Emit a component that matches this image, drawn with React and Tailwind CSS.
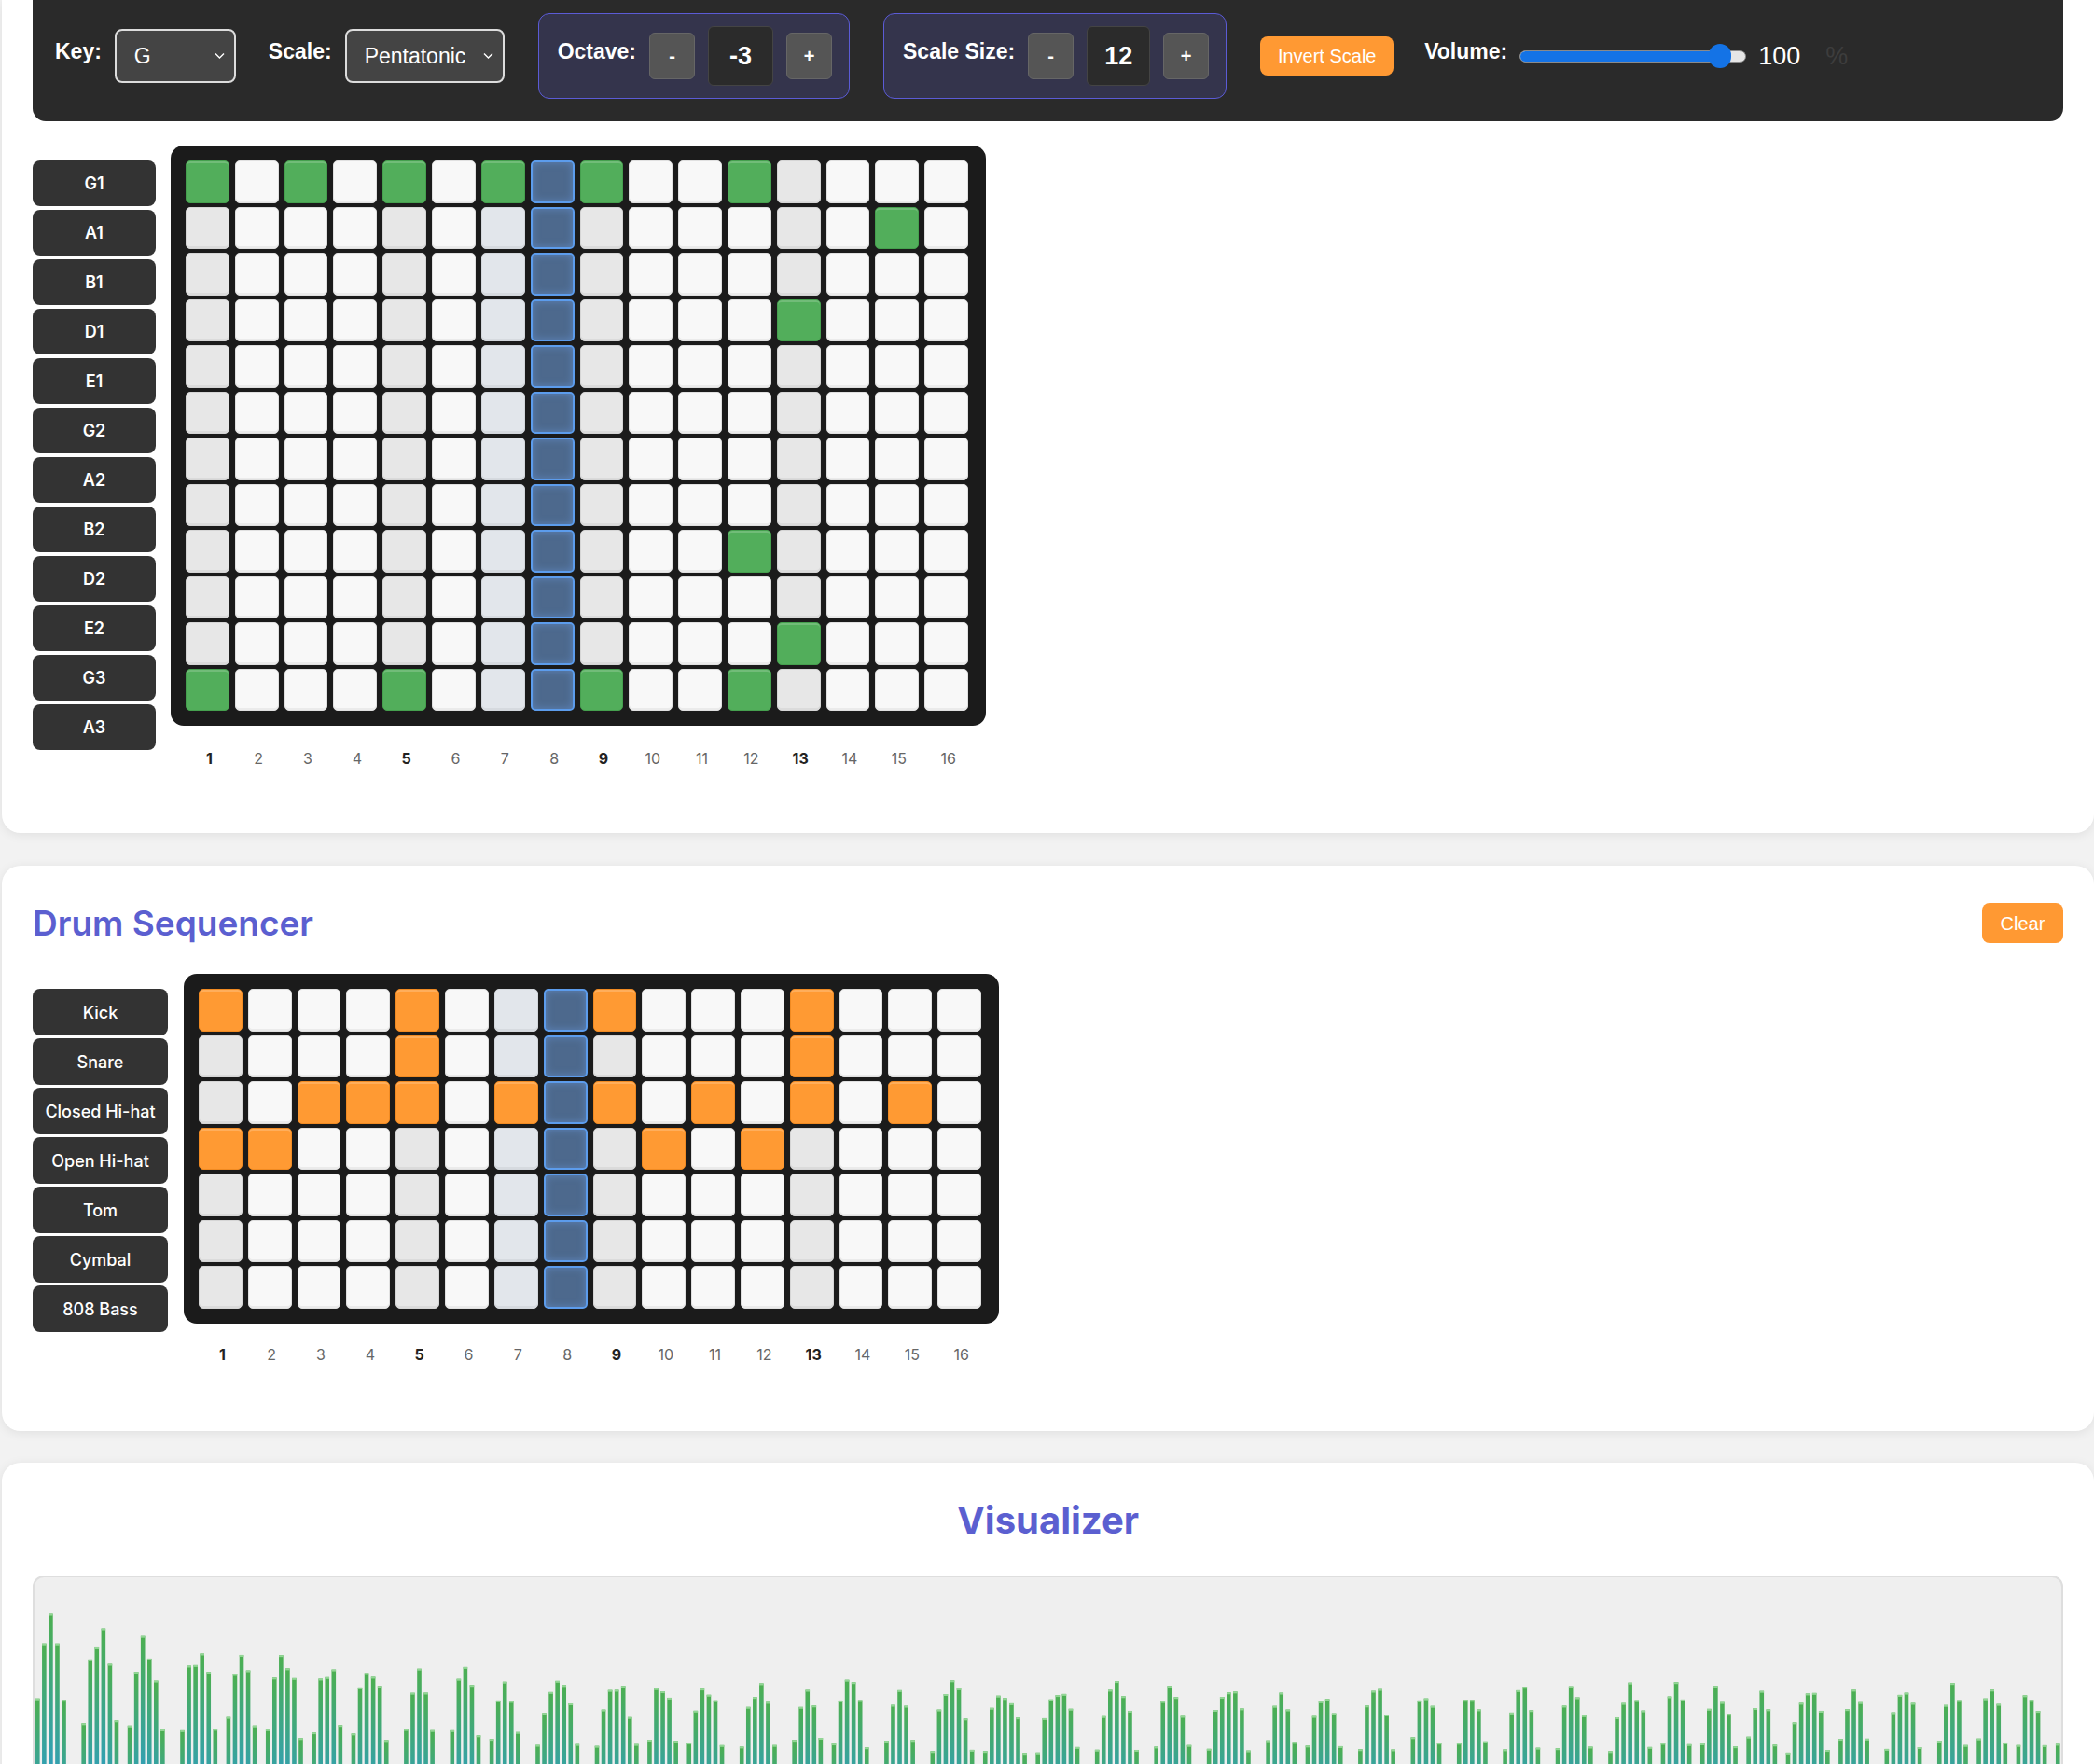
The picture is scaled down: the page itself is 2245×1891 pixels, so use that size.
import React from "react";

const ARIAL = "font-['Liberation_Sans',Arial,sans-serif]";
const INTER = "font-['Inter','Noto_Sans',sans-serif]";

const NOTES = ["G1", "A1", "B1", "D1", "E1", "G2", "A2", "B2", "D2", "E2", "G3", "A3"];
const NOTE_ON = {
  0: [1, 3, 5, 7, 9, 12],
  1: [15],
  3: [13],
  8: [12],
  10: [13],
  11: [1, 5, 9, 12],
};

const DRUMS = ["Kick", "Snare", "Closed Hi-hat", "Open Hi-hat", "Tom", "Cymbal", "808 Bass"];
const DRUM_ON = {
  0: [1, 5, 9, 13],
  1: [5, 13],
  2: [3, 4, 5, 7, 9, 11, 13, 15],
  3: [1, 2, 10, 12],
};

const STEPS = Array.from({ length: 16 }, (_, i) => i + 1);
const BEATS = [1, 5, 9, 13];
const PLAYHEAD = 8;

function cellClass(col, active, kind) {
  if (col === PLAYHEAD)
    return "h-[45.5px] rounded-[5px] border-2 border-[#5c9cec] bg-[#4d698d] shadow-[inset_0_0_8px_rgba(110,165,240,0.45)]";
  if (active && kind === "green")
    return "h-[45.5px] rounded-[5px] border border-[#45a04e] bg-[#52ae5b] shadow-[inset_0_2px_0_rgba(255,255,255,0.18)]";
  if (active)
    return "h-[45.5px] rounded-[5px] border border-[#f08a22] bg-[#ff9a33] shadow-[inset_0_2px_0_rgba(255,255,255,0.2)]";
  if (col === 7)
    return "h-[45.5px] rounded-[5px] border border-[#d3d7dc] bg-[#e2e6eb] shadow-[inset_0_-2px_0_rgba(0,0,0,0.05)]";
  if (BEATS.includes(col))
    return "h-[45.5px] rounded-[5px] border border-[#d5d5d5] bg-[#e7e7e7] shadow-[inset_0_-2px_0_rgba(0,0,0,0.05)]";
  return "h-[45.5px] rounded-[5px] border border-[#e0e0e0] bg-[#f8f8f8] shadow-[inset_0_-2px_0_rgba(0,0,0,0.05)]";
}

function Grid({ rows, on, kind }) {
  return (
    <div className="rounded-[14px] bg-[#1b1b1b] pb-[16px] pl-[16px] pr-[19px] pt-[16px]">
      <div className="grid w-[839px] grid-cols-16 gap-x-[6px] gap-y-[4px]">
        {Array.from({ length: rows }).map((_, r) =>
          STEPS.map((c) => (
            <div key={r + "-" + c} className={cellClass(c, (on[r] || []).includes(c), kind)} />
          ))
        )}
      </div>
    </div>
  );
}

function StepNumbers({ mt }) {
  return (
    <div className={`grid w-[857px] grid-cols-16 gap-x-[6px] pl-[18px] ${mt} ${INTER}`}>
      {STEPS.map((n) => (
        <div
          key={n}
          className={
            BEATS.includes(n)
              ? "text-center text-[16px] leading-[22px] font-bold text-[#222]"
              : "text-center text-[16px] leading-[22px] text-[#666]"
          }
        >
          {n}
        </div>
      ))}
    </div>
  );
}

function Chevron() {
  return (
    <svg className="absolute right-[10px] top-1/2 -translate-y-1/2" width="11" height="7" viewBox="0 0 11 7">
      <path d="M1 1l4.5 4.5L10 1" stroke="#fff" strokeWidth="1.4" fill="none" />
    </svg>
  );
}

function Stepper({ label, value, valueW }) {
  return (
    <div className="ml-[36px] flex h-[92px] items-center gap-[14px] rounded-[12px] border border-[#5b5bd6] bg-[#34344c] pl-[20px] pr-[18px]">
      <span className="mb-[10px] text-[23px] font-bold text-white">{label}</span>
      <button className="h-[50px] w-[49px] rounded-[6px] border border-[#666] bg-[#555] text-[20px] font-bold text-white">-</button>
      <div className={`flex h-[64px] ${valueW} items-center justify-center rounded-[6px] border border-[#444] bg-[#2b2b2b] text-[27px] font-bold text-white`}>
        {value}
      </div>
      <button className="h-[50px] w-[49px] rounded-[6px] border border-[#666] bg-[#555] text-[20px] font-bold text-white">+</button>
    </div>
  );
}

function ControlBar() {
  return (
    <div className={`flex h-[130px] items-center rounded-b-[14px] bg-[#2a2a2a] pb-[24px] pl-[24px] pt-[14px] ${ARIAL}`}>
      <span className="mb-[10px] text-[23px] font-bold text-white">Key:</span>
      <div className="relative ml-[14px] flex h-[58px] w-[130px] items-center rounded-[8px] border-2 border-[#dcdcdc] bg-[#444] pl-[19px] text-[23px] text-white">
        G
        <Chevron />
      </div>
      <span className="mb-[10px] ml-[35px] text-[23px] font-bold text-white">Scale:</span>
      <div className="relative ml-[14px] flex h-[58px] w-[171px] items-center rounded-[8px] border-2 border-[#dcdcdc] bg-[#444] pl-[19px] text-[23px] text-white">
        Pentatonic
        <Chevron />
      </div>
      <Stepper label="Octave:" value="-3" valueW="w-[70px]" />
      <Stepper label="Scale Size:" value="12" valueW="w-[68px]" />
      <button className="ml-[36px] h-[42px] w-[143px] rounded-[8px] bg-[#ff9933] text-[20px] text-white">Invert Scale</button>
      <span className="mb-[10px] ml-[33px] text-[23px] font-bold text-white">Volume:</span>
      <div className="relative ml-[13px] flex h-[26px] w-[243px] items-center">
        <div className="h-[13px] w-full overflow-hidden rounded-full border border-[#8a8a8a] bg-[#e6e6e6]">
          <div className="h-full w-[215px] bg-[#1473e6]" />
        </div>
        <div className="absolute left-[203px] top-0 h-[26px] w-[24px] rounded-full bg-[#1473e6]" />
      </div>
      <span className="ml-[13px] w-[72px] text-[27px] text-white">100</span>
      <span className="text-[27px] text-[#3d3d3d]">%</span>
    </div>
  );
}

function makeBars(n) {
  let s = 987654;
  const rnd = () => {
    s = (s * 1103515245 + 12345) & 0x7fffffff;
    return s / 0x7fffffff;
  };
  const bars = [];
  while (bars.length < n) {
    const len = 5 + Math.floor(rnd() * 3);
    for (let k = 0; k < len && bars.length < n; k++) {
      const idx = bars.length;
      const env = 82 + 88 * Math.exp(-idx / 40);
      const phase = (k + 0.5) / len;
      const shape = Math.pow(Math.sin(Math.PI * phase), 0.6);
      bars.push(env * shape * (0.82 + rnd() * 0.25) - 30 * (1 - shape));
    }
    const gap = 1 + Math.floor(rnd() * 2);
    for (let g = 0; g < gap && bars.length < n; g++) bars.push(-60);
  }
  return bars;
}

const BAR_COUNT = 308;
const BARS = makeBars(BAR_COUNT);

function Visualizer() {
  const W = 2170;
  const H = 296;
  const pitch = W / BAR_COUNT;
  return (
    <div className="mt-[35px] h-[300px] overflow-hidden rounded-[12px] border-2 border-[#dedede] bg-[#efefef]">
      <svg width="100%" height="100%" viewBox={`0 0 ${W} ${H}`} preserveAspectRatio="none">
        <defs>
          <linearGradient id="barGrad" x1="0" y1="0" x2="0" y2="1">
            <stop offset="0%" stopColor="#4caf50" />
            <stop offset="100%" stopColor="#2196f3" />
          </linearGradient>
        </defs>
        {BARS.map((v, i) => {
          const h = Math.max(0, v + 97);
          if (h <= 0) return null;
          const x = i * pitch + 1;
          return (
            <g key={i}>
              <rect x={x} y={H - h} width={4.6} height={h} fill="url(#barGrad)" />
              <rect x={x} y={H - h} width={4.6} height={2} fill="#93d696" />
            </g>
          );
        })}
      </svg>
    </div>
  );
}

export default function App() {
  return (
    <div className="min-h-screen bg-[#f2f2f2] pb-[40px] pl-[2px]">
      {/* piano roll card */}
      <div className="rounded-b-[20px] bg-white px-[33px] pb-[69px] shadow-[0_2px_12px_rgba(0,0,0,0.08)]">
        <ControlBar />
        <div className="mt-[26px] flex gap-[16px]">
          <div className={`flex w-[132px] flex-col gap-[4px] pt-[16px] ${INTER}`}>
            {NOTES.map((n) => (
              <div key={n} className="flex h-[49px] items-center justify-center rounded-[8px] bg-[#333] text-[18px] font-semibold text-white">
                {n}
              </div>
            ))}
          </div>
          <div className="flex flex-col">
            <Grid rows={12} on={NOTE_ON} kind="green" />
            <StepNumbers mt="mt-[24px]" />
          </div>
        </div>
      </div>

      {/* drum sequencer */}
      <div className="mt-[35px] rounded-[20px] bg-white px-[33px] pb-[71px] pt-[40px] shadow-[0_2px_12px_rgba(0,0,0,0.08)]">
        <div className="flex items-center justify-between">
          <h2 className={`text-[37px] leading-[43px] font-semibold text-[#5b5fd0] ${INTER}`}>Drum Sequencer</h2>
          <button className={`h-[43px] w-[87px] rounded-[8px] bg-[#ff9933] text-[20px] text-white ${ARIAL}`}>Clear</button>
        </div>
        <div className="mt-[33px] flex gap-[17px]">
          <div className={`flex w-[145px] flex-col gap-[3px] pt-[16px] ${INTER}`}>
            {DRUMS.map((d) => (
              <div key={d} className="flex h-[50px] items-center justify-center rounded-[8px] bg-[#333] text-[18px] font-medium text-white">
                {d}
              </div>
            ))}
          </div>
          <div className="flex flex-col">
            <Grid rows={7} on={DRUM_ON} kind="orange" />
            <StepNumbers mt="mt-[22px]" />
          </div>
        </div>
      </div>

      {/* visualizer */}
      <div className="mt-[34px] rounded-[20px] bg-white px-[33px] pb-[33px] pt-[38px] shadow-[0_2px_12px_rgba(0,0,0,0.08)]">
        <h2 className={`text-center text-[40px] leading-[48px] font-bold text-[#5b5fd0] ${INTER}`}>Visualizer</h2>
        <Visualizer />
      </div>
    </div>
  );
}
